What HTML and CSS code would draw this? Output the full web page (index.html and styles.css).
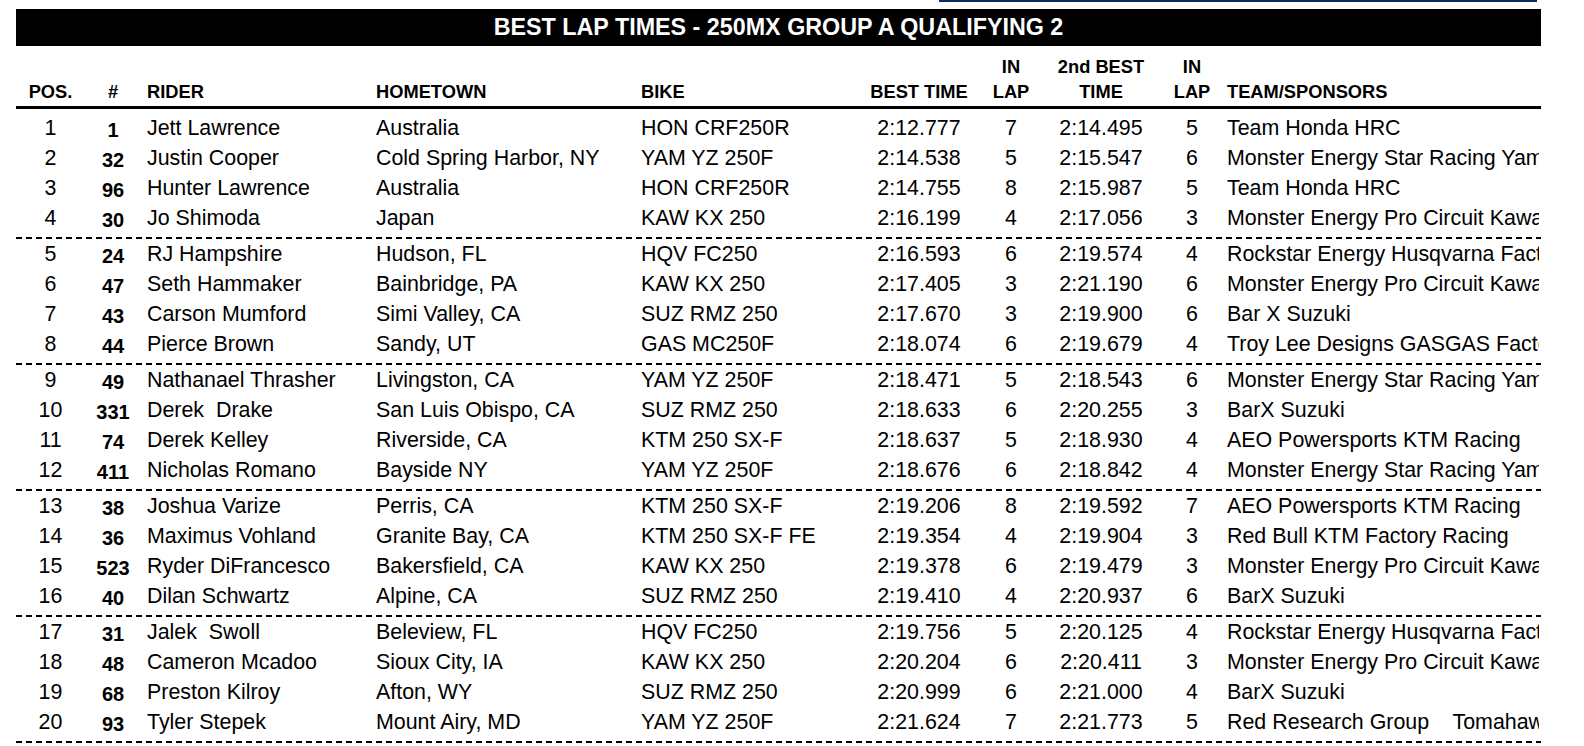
FILE: index.html
```html
<!DOCTYPE html>
<html>
<head>
<meta charset="utf-8">
<link rel="stylesheet" href="styles.css">
</head>
<body>
<div class="page">
  <div class="topline"></div>
  <div class="titlebar">BEST LAP TIMES - 250MX GROUP A QUALIFYING 2</div>
  <div class="row head">
    <div class="c c1">POS.</div>
    <div class="c c2">#</div>
    <div class="c left">RIDER</div>
    <div class="c left">HOMETOWN</div>
    <div class="c left">BIKE</div>
    <div class="c ctr">BEST TIME</div>
    <div class="c ctr">IN<br>LAP</div>
    <div class="c ctr">2nd BEST<br>TIME</div>
    <div class="c ctr">IN<br>LAP</div>
    <div class="c left team">TEAM/SPONSORS</div>
  </div>
  <div class="rule"></div>
  <div class="body">
    <div class="group">
      <div class="row"><div class="c c1">1</div><div class="c c2 num">1</div><div class="c left">Jett Lawrence</div><div class="c left">Australia</div><div class="c left">HON CRF250R</div><div class="c ctr">2:12.777</div><div class="c ctr">7</div><div class="c ctr">2:14.495</div><div class="c ctr">5</div><div class="c left team">Team Honda HRC</div></div>
      <div class="row"><div class="c c1">2</div><div class="c c2 num">32</div><div class="c left">Justin Cooper</div><div class="c left">Cold Spring Harbor, NY</div><div class="c left">YAM YZ 250F</div><div class="c ctr">2:14.538</div><div class="c ctr">5</div><div class="c ctr">2:15.547</div><div class="c ctr">6</div><div class="c left team">Monster Energy Star Racing Yamaha</div></div>
      <div class="row"><div class="c c1">3</div><div class="c c2 num">96</div><div class="c left">Hunter Lawrence</div><div class="c left">Australia</div><div class="c left">HON CRF250R</div><div class="c ctr">2:14.755</div><div class="c ctr">8</div><div class="c ctr">2:15.987</div><div class="c ctr">5</div><div class="c left team">Team Honda HRC</div></div>
      <div class="row"><div class="c c1">4</div><div class="c c2 num">30</div><div class="c left">Jo Shimoda</div><div class="c left">Japan</div><div class="c left">KAW KX 250</div><div class="c ctr">2:16.199</div><div class="c ctr">4</div><div class="c ctr">2:17.056</div><div class="c ctr">3</div><div class="c left team">Monster Energy Pro Circuit Kawasaki</div></div>
    </div>
    <div class="group">
      <div class="row"><div class="c c1">5</div><div class="c c2 num">24</div><div class="c left">RJ Hampshire</div><div class="c left">Hudson, FL</div><div class="c left">HQV FC250</div><div class="c ctr">2:16.593</div><div class="c ctr">6</div><div class="c ctr">2:19.574</div><div class="c ctr">4</div><div class="c left team">Rockstar Energy Husqvarna Factory Racing</div></div>
      <div class="row"><div class="c c1">6</div><div class="c c2 num">47</div><div class="c left">Seth Hammaker</div><div class="c left">Bainbridge, PA</div><div class="c left">KAW KX 250</div><div class="c ctr">2:17.405</div><div class="c ctr">3</div><div class="c ctr">2:21.190</div><div class="c ctr">6</div><div class="c left team">Monster Energy Pro Circuit Kawasaki</div></div>
      <div class="row"><div class="c c1">7</div><div class="c c2 num">43</div><div class="c left">Carson Mumford</div><div class="c left">Simi Valley, CA</div><div class="c left">SUZ RMZ 250</div><div class="c ctr">2:17.670</div><div class="c ctr">3</div><div class="c ctr">2:19.900</div><div class="c ctr">6</div><div class="c left team">Bar X Suzuki</div></div>
      <div class="row"><div class="c c1">8</div><div class="c c2 num">44</div><div class="c left">Pierce Brown</div><div class="c left">Sandy, UT</div><div class="c left">GAS MC250F</div><div class="c ctr">2:18.074</div><div class="c ctr">6</div><div class="c ctr">2:19.679</div><div class="c ctr">4</div><div class="c left team">Troy Lee Designs GASGAS Factory Racing</div></div>
    </div>
    <div class="group">
      <div class="row"><div class="c c1">9</div><div class="c c2 num">49</div><div class="c left">Nathanael Thrasher</div><div class="c left">Livingston, CA</div><div class="c left">YAM YZ 250F</div><div class="c ctr">2:18.471</div><div class="c ctr">5</div><div class="c ctr">2:18.543</div><div class="c ctr">6</div><div class="c left team">Monster Energy Star Racing Yamaha</div></div>
      <div class="row"><div class="c c1">10</div><div class="c c2 num">331</div><div class="c left">Derek  Drake</div><div class="c left">San Luis Obispo, CA</div><div class="c left">SUZ RMZ 250</div><div class="c ctr">2:18.633</div><div class="c ctr">6</div><div class="c ctr">2:20.255</div><div class="c ctr">3</div><div class="c left team">BarX Suzuki</div></div>
      <div class="row"><div class="c c1">11</div><div class="c c2 num">74</div><div class="c left">Derek Kelley</div><div class="c left">Riverside, CA</div><div class="c left">KTM 250 SX-F</div><div class="c ctr">2:18.637</div><div class="c ctr">5</div><div class="c ctr">2:18.930</div><div class="c ctr">4</div><div class="c left team">AEO Powersports KTM Racing</div></div>
      <div class="row"><div class="c c1">12</div><div class="c c2 num">411</div><div class="c left">Nicholas Romano</div><div class="c left">Bayside NY</div><div class="c left">YAM YZ 250F</div><div class="c ctr">2:18.676</div><div class="c ctr">6</div><div class="c ctr">2:18.842</div><div class="c ctr">4</div><div class="c left team">Monster Energy Star Racing Yamaha</div></div>
    </div>
    <div class="group">
      <div class="row"><div class="c c1">13</div><div class="c c2 num">38</div><div class="c left">Joshua Varize</div><div class="c left">Perris, CA</div><div class="c left">KTM 250 SX-F</div><div class="c ctr">2:19.206</div><div class="c ctr">8</div><div class="c ctr">2:19.592</div><div class="c ctr">7</div><div class="c left team">AEO Powersports KTM Racing</div></div>
      <div class="row"><div class="c c1">14</div><div class="c c2 num">36</div><div class="c left">Maximus Vohland</div><div class="c left">Granite Bay, CA</div><div class="c left">KTM 250 SX-F FE</div><div class="c ctr">2:19.354</div><div class="c ctr">4</div><div class="c ctr">2:19.904</div><div class="c ctr">3</div><div class="c left team">Red Bull KTM Factory Racing</div></div>
      <div class="row"><div class="c c1">15</div><div class="c c2 num">523</div><div class="c left">Ryder DiFrancesco</div><div class="c left">Bakersfield, CA</div><div class="c left">KAW KX 250</div><div class="c ctr">2:19.378</div><div class="c ctr">6</div><div class="c ctr">2:19.479</div><div class="c ctr">3</div><div class="c left team">Monster Energy Pro Circuit Kawasaki</div></div>
      <div class="row"><div class="c c1">16</div><div class="c c2 num">40</div><div class="c left">Dilan Schwartz</div><div class="c left">Alpine, CA</div><div class="c left">SUZ RMZ 250</div><div class="c ctr">2:19.410</div><div class="c ctr">4</div><div class="c ctr">2:20.937</div><div class="c ctr">6</div><div class="c left team">BarX Suzuki</div></div>
    </div>
    <div class="group">
      <div class="row"><div class="c c1">17</div><div class="c c2 num">31</div><div class="c left">Jalek  Swoll</div><div class="c left">Beleview, FL</div><div class="c left">HQV FC250</div><div class="c ctr">2:19.756</div><div class="c ctr">5</div><div class="c ctr">2:20.125</div><div class="c ctr">4</div><div class="c left team">Rockstar Energy Husqvarna Factory Racing</div></div>
      <div class="row"><div class="c c1">18</div><div class="c c2 num">48</div><div class="c left">Cameron Mcadoo</div><div class="c left">Sioux City, IA</div><div class="c left">KAW KX 250</div><div class="c ctr">2:20.204</div><div class="c ctr">6</div><div class="c ctr">2:20.411</div><div class="c ctr">3</div><div class="c left team">Monster Energy Pro Circuit Kawasaki</div></div>
      <div class="row"><div class="c c1">19</div><div class="c c2 num">68</div><div class="c left">Preston Kilroy</div><div class="c left">Afton, WY</div><div class="c left">SUZ RMZ 250</div><div class="c ctr">2:20.999</div><div class="c ctr">6</div><div class="c ctr">2:21.000</div><div class="c ctr">4</div><div class="c left team">BarX Suzuki</div></div>
      <div class="row"><div class="c c1">20</div><div class="c c2 num">93</div><div class="c left">Tyler Stepek</div><div class="c left">Mount Airy, MD</div><div class="c left">YAM YZ 250F</div><div class="c ctr">2:21.624</div><div class="c ctr">7</div><div class="c ctr">2:21.773</div><div class="c ctr">5</div><div class="c left team">Red Research Group    Tomahawk Suzuki</div></div>
    </div>
  </div>
</div>
</body>
</html>
```
FILE: styles.css
```css
html, body {
  margin: 0;
  padding: 0;
  background: #ffffff;
}
body {
  font-family: "Liberation Sans", Arial, Helvetica, sans-serif;
  color: #000000;
  overflow: hidden;
}
.page {
  width: 1584px;
  height: 746px;
  overflow: hidden;
}
.topline {
  margin-left: 939px;
  width: 598px;
  height: 2px;
  background: #0b2d5e;
}
.titlebar {
  margin: 7px 0 0 16px;
  width: 1525px;
  height: 37px;
  background: #000000;
  color: #ffffff;
  font-weight: bold;
  font-size: 23.3px;
  line-height: 36px;
  text-align: center;
}
.row {
  margin-left: 16px;
  width: 1525px;
  display: grid;
  grid-template-columns: 69px 56px 229px 265px 215px 138px 46px 134px 48px 323px 2px;
  grid-template-rows: 30px;
  height: 30px;
  font-size: 21.4px;
  line-height: 30px;
  align-items: baseline;
}
.c {
  white-space: pre;
}
.head {
  grid-template-rows: 58px;
  height: 58px;
  padding-bottom: 2px;
  align-items: end;
  font-weight: bold;
  font-size: 18.3px;
  line-height: 25px;
}
.rule {
  margin: 0 0 4px 16px;
  width: 1525px;
  height: 3px;
  background: #000000;
}
.c1, .c2, .ctr {
  text-align: center;
}
.left {
  padding-left: 6px;
}
.num {
  font-weight: bold;
  font-size: 20px;
  align-self: end;
  line-height: 25px;
}
.team {
  padding-left: 11px;
  overflow: hidden;
}
.group::after {
  content: "";
  display: block;
  margin: 4px 0 0 16px;
  width: 1525px;
  height: 2px;
  background: repeating-linear-gradient(to right, #000000 0 6px, transparent 6px 10px);
}
```
